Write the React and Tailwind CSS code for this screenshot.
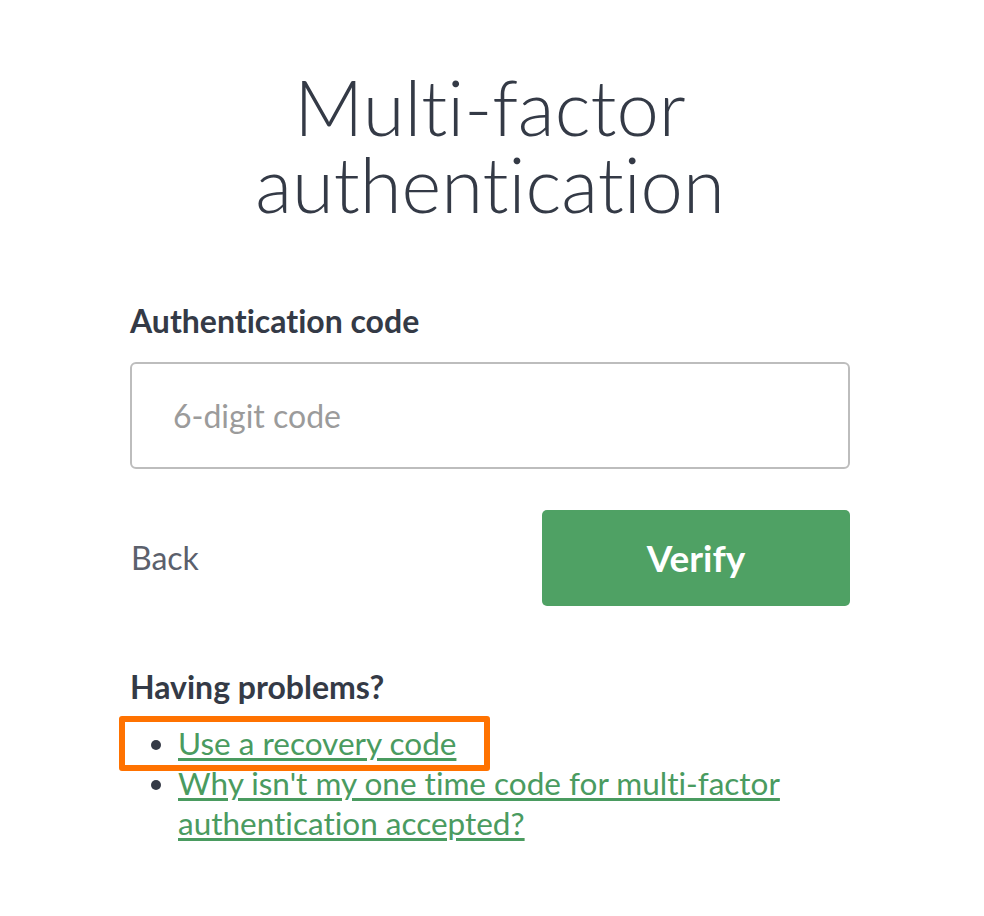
import { useState } from 'react';

export default function App() {
  const [code, setCode] = useState('');

  return (
    <div className="min-h-screen bg-white font-['Lato','Liberation_Sans',sans-serif] text-[#343a46] [font-variant-ligatures:none]">
      <div className="ml-[130px] w-[720px] pt-[68px]">
        <h1 className="text-center text-[76px] font-light leading-[77px]">
          Multi-factor authentication
        </h1>

        <form onSubmit={(e) => e.preventDefault()}>
          <label htmlFor="mfa-code" className="mt-[80px] block text-[32px] font-bold leading-[38px]">
            Authentication code
          </label>
          <input
            id="mfa-code"
            type="text"
            inputMode="numeric"
            value={code}
            onChange={(e) => setCode(e.target.value)}
            placeholder="6-digit code"
            className="mt-[22px] block h-[107px] w-full rounded-[6px] border-2 border-[#bdbdbd] px-[41px] text-[32px] text-[#343a46] outline-none placeholder:text-[#9b9b9b]"
          />

          <div className="mt-[41px] flex items-center justify-between">
            <a href="#" className="ml-px text-[32px] text-[#5b606c]">
              Back
            </a>
            <button
              type="submit"
              className="h-[96px] w-[308px] rounded-[5px] bg-[#4fa164] text-[37px] font-bold text-white"
            >
              Verify
            </button>
          </div>
        </form>

        <h2 className="mt-[62px] text-[32px] font-bold leading-[38px]">Having problems?</h2>
        <ul className="mt-[17px] list-disc pl-[48px] text-[31.5px] leading-[40px]">
          <li className="relative">
            <a href="#" className="text-[#4a9b60] underline underline-offset-[3px]">
              Use a recovery code
            </a>
            {/* highlight around the recovery link */}
            <span className="pointer-events-none absolute left-[-59px] top-[-7px] h-[55px] w-[371px] rounded-[3px] border-[6px] border-[#ff7200]" />
          </li>
          <li>
            <a href="#" className="text-[#4a9b60] underline underline-offset-[3px]">
              Why isn't my one time code for multi-factor authentication accepted?
            </a>
          </li>
        </ul>
      </div>
    </div>
  );
}
